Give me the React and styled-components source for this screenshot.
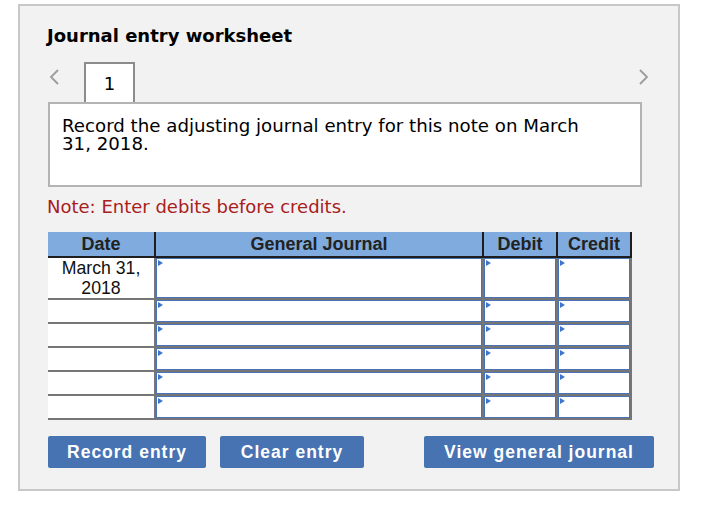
import React from "react";
import styled, { createGlobalStyle } from "styled-components";

const Global = createGlobalStyle`
  html, body { margin: 0; padding: 0; background: #ffffff; }
  body { font-family: "DejaVu Sans", Verdana, sans-serif; color: #000; }
`;

const Panel = styled.div`
  box-sizing: border-box;
  margin: 4px 0 0 18px;
  width: 662px;
  height: 487px;
  border: 2px solid #c8c8c8;
  background: #f2f2f2;
  padding: 18px 0 0 28px;
  display: flex;
  flex-direction: column;
`;

const Title = styled.h1`
  margin: 0 0 0 -1px;
  font-family: "DejaVu Sans", Verdana, sans-serif;
  font-weight: bold;
  font-size: 18px;
  line-height: 24px;
  height: 24px;
`;

const NavRow = styled.div`
  margin-top: 14px;
  width: 604px;
  height: 40px;
  display: flex;
  align-items: flex-start;
`;

const Chevron = styled.span`
  display: flex;
  width: 14px;
  height: 18px;
  margin-top: 6px;
  margin-left: ${(p) => p.$left || 0}px;
  color: #9c9c9c;
`;

const Tab = styled.div`
  box-sizing: border-box;
  margin-left: 22px;
  width: 51px;
  height: 40px;
  border: 2px solid #8c8c8c;
  border-bottom: none;
  background: #ffffff;
  display: flex;
  justify-content: center;
  padding-top: 11px;
  font-size: 18px;
  line-height: 18px;
`;

const Prompt = styled.div`
  box-sizing: border-box;
  width: 594px;
  height: 85px;
  border: 2px solid #b4b4b4;
  background: #ffffff;
  padding: 13px 40px 0 12px;
  font-size: 18.2px;
  line-height: 18px;
`;

const Note = styled.p`
  margin: 8px 0 0 -1px;
  color: #a8201c;
  font-size: 18px;
  line-height: 24px;
  height: 24px;
`;

const Journal = styled.div`
  margin-top: 13px;
  width: 584px;
  font-family: "Liberation Sans", Arial, sans-serif;
`;

const cols = "106px 326px 72px 72px";

const HeaderRow = styled.div`
  display: grid;
  grid-template-columns: ${cols};
  column-gap: 2px;
  padding: 0 2px 2px 0;
  background: #1e1e1e;
`;

const HeadCell = styled.div`
  height: 24px;
  background: #7fabdf;
  color: #222222;
  font-weight: bold;
  font-size: 18px;
  display: flex;
  align-items: center;
  justify-content: center;
`;

const Body = styled.div`
  display: grid;
  grid-template-columns: ${cols};
  grid-template-rows: 40px repeat(5, 22px);
  column-gap: 2px;
  row-gap: 2px;
  padding: 0 2px 2px 0;
  background: #767676;
`;

const DateCell = styled.div`
  background: #ffffff;
  text-align: center;
  font-size: 17.7px;
  line-height: 20px;
  color: #111111;
`;

const InputCell = styled.div`
  position: relative;
  box-sizing: border-box;
  background: #ffffff;
  border: 1px solid #4a73b6;
  &::before {
    content: "";
    position: absolute;
    top: 1px;
    left: 1px;
    width: 0;
    height: 0;
    border-top: 3px solid transparent;
    border-bottom: 3px solid transparent;
    border-left: 5px solid #3f75c6;
  }
`;

const Buttons = styled.div`
  margin-top: 16px;
  display: flex;
  gap: 14px;
`;

const Button = styled.button`
  box-sizing: border-box;
  width: ${(p) => p.$w}px;
  height: 32px;
  margin-left: ${(p) => p.$ml || 0}px;
  border: none;
  border-radius: 2px;
  background: #4773b3;
  color: #ffffff;
  font-family: "Liberation Sans", Arial, sans-serif;
  font-weight: bold;
  font-size: 17.5px;
  letter-spacing: 1px;
  padding: 0;
  display: flex;
  align-items: center;
  justify-content: center;
`;

const ChevronIcon = ({ dir }) => (
  <svg width="14" height="18" viewBox="0 0 14 18" fill="none">
    <path
      d={dir === "left" ? "M10 2 L3 9 L10 16" : "M4 2 L11 9 L4 16"}
      stroke="currentColor"
      strokeWidth="1.8"
    />
  </svg>
);

const rows = [["March 31,", "2018"], null, null, null, null, null];

export default function App() {
  return (
    <>
      <Global />
      <Panel>
        <Title>Journal entry worksheet</Title>
        <NavRow>
          <Chevron $left={0}>
            <ChevronIcon dir="left" />
          </Chevron>
          <Tab>1</Tab>
          <Chevron $left={501}>
            <ChevronIcon dir="right" />
          </Chevron>
        </NavRow>
        <Prompt>
          Record the adjusting journal entry for this note on March 31, 2018.
        </Prompt>
        <Note>Note: Enter debits before credits.</Note>
        <Journal>
          <HeaderRow>
            <HeadCell>Date</HeadCell>
            <HeadCell>General Journal</HeadCell>
            <HeadCell>Debit</HeadCell>
            <HeadCell>Credit</HeadCell>
          </HeaderRow>
          <Body>
            {rows.map((d, i) => (
              <React.Fragment key={i}>
                <DateCell>
                  {d ? (
                    <>
                      {d[0]}
                      <br />
                      {d[1]}
                    </>
                  ) : null}
                </DateCell>
                <InputCell />
                <InputCell />
                <InputCell />
              </React.Fragment>
            ))}
          </Body>
        </Journal>
        <Buttons>
          <Button $w={158}>Record entry</Button>
          <Button $w={144}>Clear entry</Button>
          <Button $w={230} $ml={46}>View general journal</Button>
        </Buttons>
      </Panel>
    </>
  );
}
